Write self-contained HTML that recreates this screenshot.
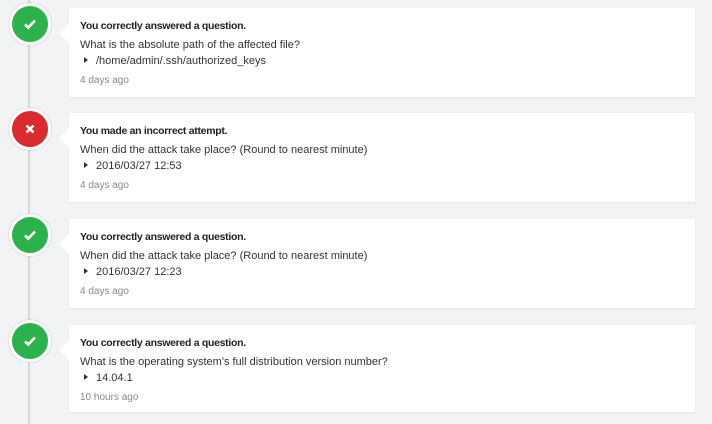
<!DOCTYPE html>
<html><head><style>
body{margin:0;width:712px;height:424px;background:#f2f3f5;font-family:"Liberation Sans",sans-serif;position:relative;overflow:hidden}
.line{position:absolute;left:28px;top:0;width:2px;height:424px;background:#d8d9db}
.item{position:absolute;left:0;width:712px;height:89px}
.ic{position:absolute;left:9px;top:-5px;width:36px;height:36px;border-radius:50%;border:3px solid #fff;box-shadow:0 0 2px rgba(0,0,0,.2);display:flex;align-items:center;justify-content:center}
.g{background:#2bb24c}.r{background:#dc2b2e}
.card{position:absolute;left:69px;top:0;width:626px;height:89px;background:#fff;box-shadow:0 1px 2px rgba(0,0,0,.06)}
.card:before{content:"";position:absolute;left:-10px;top:15px;border:10px solid transparent;border-right-color:#fff;border-left:0}
.t{position:absolute;left:11px;top:12px;font-size:10.5px;letter-spacing:-0.3px;font-weight:bold;color:#222}
.q{position:absolute;left:11px;top:31px;font-size:11px;color:#333}
.a{position:absolute;left:15px;top:47px;font-size:11px;color:#333}
.a:before{content:"";display:inline-block;border-left:4px solid #333;border-top:3px solid transparent;border-bottom:3px solid transparent;margin-right:8px;vertical-align:1px}
.d{position:absolute;left:11px;top:67px;font-size:10px;color:#888}
</style></head><body>
<div class="line"></div>
<div class="item" style="top:8px"><div class="ic g"><svg width="14" height="12" viewBox="0 0 14 12"><path d="M2 6.5l3.2 3L12 2.5" stroke="#fff" stroke-width="2.6" fill="none"/></svg></div><div class="card"><div class="t">You correctly answered a question.</div><div class="q">What is the absolute path of the affected file?</div><div class="a">/home/admin/.ssh/authorized_keys</div><div class="d">4 days ago</div></div></div>
<div class="item" style="top:113px"><div class="ic r"><svg width="12" height="12" viewBox="0 0 12 12"><path d="M2.5 2.5l7 7M9.5 2.5l-7 7" stroke="#fff" stroke-width="2.6"/></svg></div><div class="card"><div class="t">You made an incorrect attempt.</div><div class="q">When did the attack take place? (Round to nearest minute)</div><div class="a">2016/03/27 12:53</div><div class="d">4 days ago</div></div></div>
<div class="item" style="top:219px"><div class="ic g"><svg width="14" height="12" viewBox="0 0 14 12"><path d="M2 6.5l3.2 3L12 2.5" stroke="#fff" stroke-width="2.6" fill="none"/></svg></div><div class="card"><div class="t">You correctly answered a question.</div><div class="q">When did the attack take place? (Round to nearest minute)</div><div class="a">2016/03/27 12:23</div><div class="d">4 days ago</div></div></div>
<div class="item" style="top:325px"><div class="ic g"><svg width="14" height="12" viewBox="0 0 14 12"><path d="M2 6.5l3.2 3L12 2.5" stroke="#fff" stroke-width="2.6" fill="none"/></svg></div><div class="card" style="height:87px"><div class="t">You correctly answered a question.</div><div class="q">What is the operating system's full distribution version number?</div><div class="a">14.04.1</div><div class="d">10 hours ago</div></div></div>
</body></html>
